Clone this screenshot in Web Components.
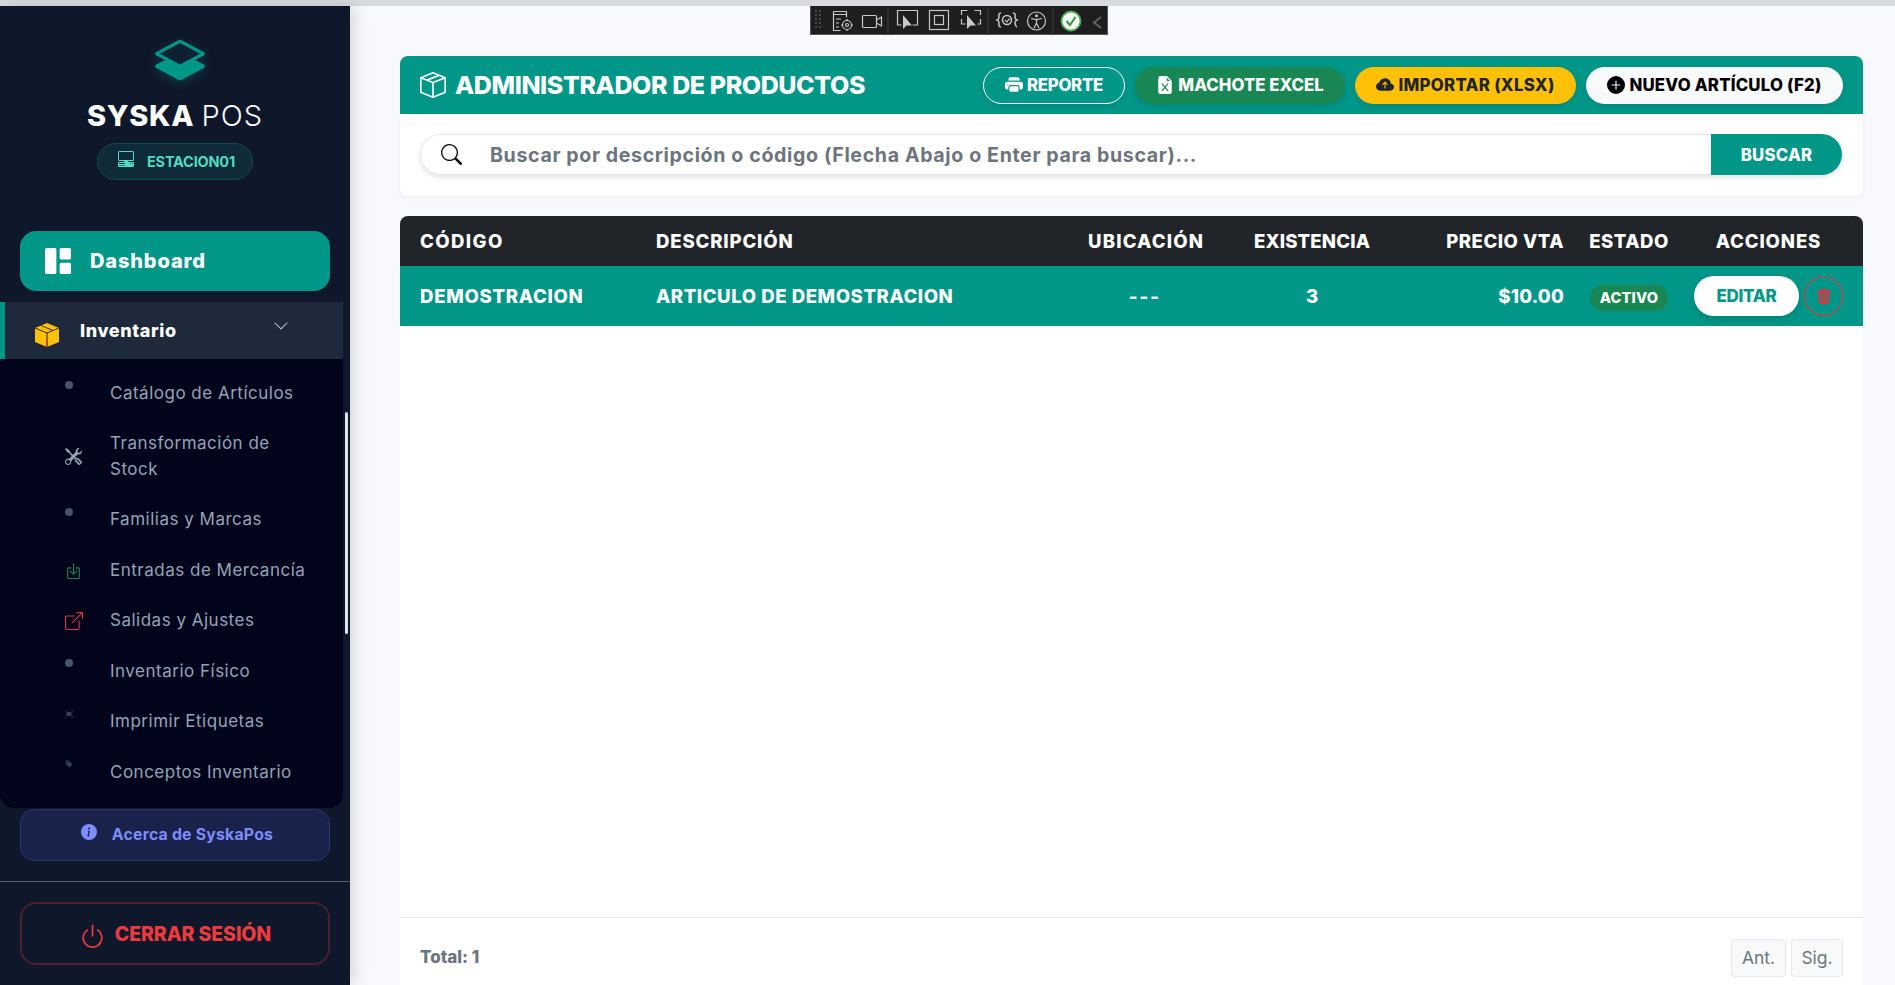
<!DOCTYPE html>
<html lang="es"><head><meta charset="utf-8"><title>Syska POS</title>
<style>html,body{margin:0;padding:0;height:985px;overflow:hidden;background:#f8f9fc;font-family:Inter,"Noto Sans",sans-serif}</style>
</head><body>
<syska-app>
  <syska-sidebar slot="side">
    <syska-brand></syska-brand>
    <nav-main label="Dashboard"></nav-main>
    <nav-panel>
      <nav-sub icon="dot">Catálogo de Artículos</nav-sub>
      <nav-sub icon="tools">Transformación de<br>Stock</nav-sub>
      <nav-sub icon="dot">Familias y Marcas</nav-sub>
      <nav-sub icon="in">Entradas de Mercancía</nav-sub>
      <nav-sub icon="out">Salidas y Ajustes</nav-sub>
      <nav-sub icon="dot">Inventario Físico</nav-sub>
      <nav-sub icon="scan">Imprimir Etiquetas</nav-sub>
      <nav-sub icon="tag">Conceptos Inventario</nav-sub>
    </nav-panel>
    <about-link>Acerca de SyskaPos</about-link>
    <logout-box>CERRAR SESIÓN</logout-box>
  </syska-sidebar>
  <dev-toolbar slot="over"></dev-toolbar>
  <page-header>
    <pill-btn kind="outline" icon="printer" w="142" ls="-.3">REPORTE</pill-btn>
    <pill-btn kind="excel" icon="excel" w="210" ls=".04">MACHOTE EXCEL</pill-btn>
    <pill-btn kind="warn" icon="cloud" w="221" ls=".29">IMPORTAR (XLSX)</pill-btn>
    <pill-btn kind="light" icon="plus" w="257" ls=".2">NUEVO ARTÍCULO (F2)</pill-btn>
  </page-header>
  <search-card></search-card>
  <product-panel></product-panel>
</syska-app>
<script>
const P={
layers:'M8.235 1.559a.5.5 0 0 0-.47 0l-7.5 4a.5.5 0 0 0 0 .882L3.188 8 .264 9.559a.5.5 0 0 0 0 .882l7.5 4a.5.5 0 0 0 .47 0l7.5-4a.5.5 0 0 0 0-.882L12.813 8l2.922-1.559a.5.5 0 0 0 0-.882l-7.5-4zM8 9.433 1.562 6 8 2.567 14.438 6 8 9.433z',
pc:'M1.5 0A1.5 1.5 0 0 0 0 1.5v7A1.5 1.5 0 0 0 1.5 10H6v1H1a1 1 0 0 0-1 1v3a1 1 0 0 0 1 1h14a1 1 0 0 0 1-1v-3a1 1 0 0 0-1-1h-5v-1h4.5A1.5 1.5 0 0 0 16 8.5v-7A1.5 1.5 0 0 0 14.5 0h-13Zm0 1h13a.5.5 0 0 1 .5.5v7a.5.5 0 0 1-.5.5h-13a.5.5 0 0 1-.5-.5v-7a.5.5 0 0 1 .5-.5ZM12 12.5a.5.5 0 1 1 1 0 .5.5 0 0 1-1 0Zm2 0a.5.5 0 1 1 1 0 .5.5 0 0 1-1 0ZM1.5 12h5a.5.5 0 0 1 0 1h-5a.5.5 0 0 1 0-1ZM1 14.25a.25.25 0 0 1 .25-.25h5.5a.25.25 0 1 1 0 .5h-5.5a.25.25 0 0 1-.25-.25Z',
grid:'M0 1a1 1 0 0 1 1-1h5a1 1 0 0 1 1 1v14a1 1 0 0 1-1 1H1a1 1 0 0 1-1-1V1zm9 0a1 1 0 0 1 1-1h5a1 1 0 0 1 1 1v5a1 1 0 0 1-1 1h-5a1 1 0 0 1-1-1V1zm0 9a1 1 0 0 1 1-1h5a1 1 0 0 1 1 1v5a1 1 0 0 1-1 1h-5a1 1 0 0 1-1-1v-5z',
box:'M8.186 1.113a.5.5 0 0 0-.372 0L1.846 3.5l2.404.961L10.404 2l-2.218-.887zm3.564 1.426L5.596 5 8 5.961 14.154 3.5l-2.404-.961zm3.25 1.7-6.5 2.6v7.922l6.5-2.6V4.24zM7.5 14.762V6.838L1 4.239v7.925l6.5 2.6zM7.443.184a1.5 1.5 0 0 1 1.114 0l7.129 2.852A.5.5 0 0 1 16 3.5v8.662a1 1 0 0 1-.629.928l-7.185 2.874a.5.5 0 0 1-.372 0L.63 13.09a1 1 0 0 1-.63-.928V3.5a.5.5 0 0 1 .314-.464L7.443.184z',
tools:'M1 0 0 1l2.2 3.081a1 1 0 0 0 .815.419h.07a1 1 0 0 1 .708.293l2.675 2.675-2.617 2.654A3.003 3.003 0 0 0 0 13a3 3 0 1 0 5.878-.851l2.654-2.617.968.968-.305.914a1 1 0 0 0 .242 1.023l3.27 3.27a.997.997 0 0 0 1.414 0l1.586-1.586a.997.997 0 0 0 0-1.414l-3.27-3.27a1 1 0 0 0-1.023-.242L10.5 9.5l-.96-.96 2.68-2.643A3.005 3.005 0 0 0 16 3c0-.269-.035-.53-.102-.777l-2.14 2.141L12 4l-.364-1.757L13.777.102a3 3 0 0 0-3.675 3.68L7.462 6.46 4.793 3.793a1 1 0 0 1-.293-.707v-.071a1 1 0 0 0-.419-.814L1 0Zm9.646 10.646a.5.5 0 0 1 .708 0l2.914 2.915a.5.5 0 0 1-.707.707l-2.915-2.914a.5.5 0 0 1 0-.708ZM3 11l.471.242.529.026.287.445.445.287.026.529L5 13l-.242.471-.026.529-.445.287-.287.445-.529.026L3 15l-.471-.242L2 14.732l-.287-.445L1.268 14l-.026-.529L1 13l.242-.471.026-.529.445-.287.287-.445.529-.026L3 11Z',
in:'M3.5 6a.5.5 0 0 0-.5.5v8a.5.5 0 0 0 .5.5h9a.5.5 0 0 0 .5-.5v-8a.5.5 0 0 0-.5-.5h-2a.5.5 0 0 1 0-1h2A1.5 1.5 0 0 1 14 6.5v8a1.5 1.5 0 0 1-1.5 1.5h-9A1.5 1.5 0 0 1 2 14.5v-8A1.5 1.5 0 0 1 3.5 5h2a.5.5 0 0 1 0 1h-2zM7.646 11.854a.5.5 0 0 0 .708 0l3-3a.5.5 0 0 0-.708-.708L8.5 10.293V1.5a.5.5 0 0 0-1 0v8.793L5.354 8.146a.5.5 0 1 0-.708.708l3 3z',
out:'M8.636 3.5a.5.5 0 0 0-.5-.5H1.5A1.5 1.5 0 0 0 0 4.5v10A1.5 1.5 0 0 0 1.5 16h10a1.5 1.5 0 0 0 1.5-1.5V7.864a.5.5 0 0 0-1 0V14.5a.5.5 0 0 1-.5.5h-10a.5.5 0 0 1-.5-.5v-10a.5.5 0 0 1 .5-.5h6.636a.5.5 0 0 0 .5-.5zM16 .5a.5.5 0 0 0-.5-.5h-5a.5.5 0 0 0 0 1h3.793L6.146 9.146a.5.5 0 1 0 .708.708L15 1.707V5.5a.5.5 0 0 0 1 0v-5z',
info:'M8 16A8 8 0 1 0 8 0a8 8 0 0 0 0 16zm.93-9.412-1 4.705c-.07.34.029.533.304.533.194 0 .487-.07.686-.246l-.088.416c-.287.346-.92.598-1.465.598-.703 0-1.002-.422-.808-1.319l.738-3.468c.064-.293.006-.399-.287-.47l-.451-.081.082-.381 2.29-.287zM8 5.5a1 1 0 1 1 0-2 1 1 0 0 1 0 2z',
power:'M7.5 1v7h1V1h-1zM3 8.812a4.999 4.999 0 0 1 2.578-4.375l-.485-.874A6 6 0 1 0 11 3.616l-.501.865A5 5 0 1 1 3 8.812z',
printer:'M5 1a2 2 0 0 0-2 2v1h10V3a2 2 0 0 0-2-2H5zm6 8H5a1 1 0 0 0-1 1v3a1 1 0 0 0 1 1h6a1 1 0 0 0 1-1v-3a1 1 0 0 0-1-1zM0 7a2 2 0 0 1 2-2h12a2 2 0 0 1 2 2v3a2 2 0 0 1-2 2h-1v-2a2 2 0 0 0-2-2H5a2 2 0 0 0-2 2v2H2a2 2 0 0 1-2-2V7zm2.5 1a.5.5 0 1 0 0-1 .5.5 0 0 0 0 1z',
excel:'M9.293 0H4a2 2 0 0 0-2 2v12a2 2 0 0 0 2 2h8a2 2 0 0 0 2-2V4.707A1 1 0 0 0 13.707 4L10 .293A1 1 0 0 0 9.293 0zM9.5 3.5v-2l3 3h-2a1 1 0 0 1-1-1zM5.884 6.68 8 9.219l2.116-2.54a.5.5 0 1 1 .768.641L8.651 10l2.233 2.68a.5.5 0 0 1-.768.64L8 10.781l-2.116 2.54a.5.5 0 0 1-.768-.641L7.349 10 5.116 7.32a.5.5 0 1 1 .768-.64z',
cloud:'M8 2a5.53 5.53 0 0 0-3.594 1.342c-.766.66-1.321 1.52-1.464 2.383C1.266 6.095 0 7.555 0 9.318 0 11.366 1.708 13 3.781 13h8.906C14.502 13 16 11.57 16 9.773c0-1.636-1.242-2.969-2.834-3.194C12.923 3.999 10.69 2 8 2zm2.354 5.146a.5.5 0 0 1-.708.708L8.5 6.707V10.5a.5.5 0 0 1-1 0V6.707L6.354 7.854a.5.5 0 1 1-.708-.708l2-2a.5.5 0 0 1 .708 0l2 2z',
plus:'M16 8A8 8 0 1 1 0 8a8 8 0 0 1 16 0zM8.5 4.5a.5.5 0 0 0-1 0v3h-3a.5.5 0 0 0 0 1h3v3a.5.5 0 0 0 1 0v-3h3a.5.5 0 0 0 0-1h-3v-3z',
search:'M11.742 10.344a6.5 6.5 0 1 0-1.397 1.398h-.001c.03.04.062.078.098.115l3.85 3.85a1 1 0 0 0 1.415-1.414l-3.85-3.85a1.007 1.007 0 0 0-.115-.1zM12 6.5a5.5 5.5 0 1 1-11 0 5.5 5.5 0 0 1 11 0z',
trash:'M11 1.5v1h3.5a.5.5 0 0 1 0 1h-.538l-.853 10.66A2 2 0 0 1 11.115 16h-6.23a2 2 0 0 1-1.994-1.84L2.038 3.5H1.5a.5.5 0 0 1 0-1H5v-1A1.5 1.5 0 0 1 6.5 0h3A1.5 1.5 0 0 1 11 1.5Zm-5 0v1h4v-1a.5.5 0 0 0-.5-.5h-3a.5.5 0 0 0-.5.5ZM4.5 5.029l.5 8.5a.5.5 0 1 0 .998-.06l-.5-8.5a.5.5 0 1 0-.998.06Zm6.53-.528a.5.5 0 0 0-.528.47l-.5 8.5a.5.5 0 0 0 .998.058l.5-8.5a.5.5 0 0 0-.47-.528ZM8 4.5a.5.5 0 0 0-.5.5v8.5a.5.5 0 0 0 1 0V5a.5.5 0 0 0-.5-.5Z',
chev:'M1.646 4.646a.5.5 0 0 1 .708 0L8 10.293l5.646-5.647a.5.5 0 0 1 .708.708l-6 6a.5.5 0 0 1-.708 0l-6-6a.5.5 0 0 1 0-.708z',
scan:'M1.5 1a.5.5 0 0 0-.5.5v3a.5.5 0 0 1-1 0v-3A1.5 1.5 0 0 1 1.5 0h3a.5.5 0 0 1 0 1h-3zM11 .5a.5.5 0 0 1 .5-.5h3A1.5 1.5 0 0 1 16 1.5v3a.5.5 0 0 1-1 0v-3a.5.5 0 0 0-.5-.5h-3a.5.5 0 0 1-.5-.5zM.5 11a.5.5 0 0 1 .5.5v3a.5.5 0 0 0 .5.5h3a.5.5 0 0 1 0 1h-3A1.5 1.5 0 0 1 0 14.5v-3a.5.5 0 0 1 .5-.5zm15 0a.5.5 0 0 1 .5.5v3a1.5 1.5 0 0 1-1.5 1.5h-3a.5.5 0 0 1 0-1h3a.5.5 0 0 0 .5-.5v-3a.5.5 0 0 1 .5-.5zM3 4h10v8H3z',
tag:'M2 1a1 1 0 0 0-1 1v4.586a1 1 0 0 0 .293.707l7 7a1 1 0 0 0 1.414 0l4.586-4.586a1 1 0 0 0 0-1.414l-7-7A1 1 0 0 0 6.586 1H2zm4 3.5a1.5 1.5 0 1 1-3 0 1.5 1.5 0 0 1 3 0z'
};
function def(name,html,init){
  const t=document.createElement('template');t.innerHTML=html;
  customElements.define(name,class extends HTMLElement{
    constructor(){super();this.attachShadow({mode:'open'}).appendChild(t.content.cloneNode(true));}
    connectedCallback(){if(init)init.call(this,this.shadowRoot);}
  });
}
def('x-icon','<style>:host{display:inline-flex;flex:none;width:var(--s,16px);height:var(--s,16px)}svg{width:100%;height:100%;display:block;fill:currentColor}</style><svg viewBox="0 0 16 16" aria-hidden="true"><path/></svg>',function(r){
  r.querySelector('path').setAttribute('d',P[this.getAttribute('name')]||'');
});
def('syska-app',`<style>
:host{display:flex;flex-direction:column;width:1895px;height:985px;overflow:hidden;background:#f8f9fc;position:relative}
.strip{height:6px;background:#d9dcdf;flex:none}
.row{flex:1;display:flex;min-height:0}
main{flex:1;min-width:0;display:flex;flex-direction:column;padding:50px 32px 0 50px;box-sizing:border-box}
</style><div class="strip"></div><slot name="over"></slot><div class="row"><slot name="side"></slot><main><slot></slot></main></div>`);
def('syska-sidebar',`<style>
:host{display:flex;flex-direction:column;flex:none;width:350px;background:#0f172a;box-shadow:4px 0 16px rgba(0,0,0,.14);position:relative;z-index:1}
</style><slot></slot>`);
def('syska-brand',`<style>
:host{display:flex;flex-direction:column;align-items:center;height:225px;box-sizing:border-box;padding-top:34px;flex:none}
x-icon{--s:50px;color:#009688;margin:-5px 0 0 10px;filter:drop-shadow(0 2px 6px rgba(0,150,136,.35))}
h1{margin:12.5px 0 0;color:#fff;font:300 29px/36px Inter,sans-serif;letter-spacing:1.05px;word-spacing:-2px;white-space:nowrap}
b{font-weight:800;letter-spacing:.7px}
.st{margin-top:9.5px;display:flex;align-items:center;box-sizing:border-box;width:156px;height:37px;padding-left:20px;border:1px solid #0f4a50;border-radius:19px;background:#0f2a38;color:#4fdcc0;font:700 14.5px Inter,sans-serif;letter-spacing:-.2px}
.st x-icon{--s:16px;color:#4fdcc0;margin:-6px 13px 0 0;filter:none}
</style><x-icon name="layers"></x-icon><h1><b>SYSKA</b> POS</h1><div class="st"><x-icon name="pc"></x-icon>ESTACION01</div>`);
def('nav-main',`<style>
:host{display:block;flex:none;padding:0 20px;height:71px;box-sizing:border-box}
a{display:flex;align-items:center;height:60px;border-radius:16px;background:#009688;color:#fff;padding-left:25px;font:800 20px Inter,sans-serif;letter-spacing:.87px}
x-icon{--s:26px;margin-right:19px}
</style><a><x-icon name="grid"></x-icon><span></span></a>`,function(r){r.querySelector('span').textContent=this.getAttribute('label');});
def('nav-panel',`<style>
:host{display:block;flex:none;width:343px;height:506px;background:#01041a;border-radius:0 0 14px 14px;position:relative;overflow:visible}
.head{display:flex;align-items:center;height:57px;background:#1e293b;border-left:5px solid #009688;box-sizing:border-box;padding-left:29px;color:#fff;font:800 18px Inter,sans-serif;letter-spacing:.6px}
svg{width:26px;height:26px;margin:9px 0 0 0;flex:none}
span{margin-left:20px;flex:1}
x-icon{--s:16px;color:#cbd5e1;margin:-10px 54px 0 0}
.list{padding-top:9px}
.bar{position:absolute;left:345px;top:110px;width:3px;height:222px;background:#dbe2ea;border-radius:2px}
</style><div class="head"><svg viewBox="0 0 26 26"><path d="M13 1 25 6v14l-12 5L1 20V6z" fill="#ffc107"/><path d="M1 6l12 5 12-5M13 11v14M7 3.500l12 5" fill="none" stroke="#3a2c00" stroke-width="1"/><path d="M13 16v9" stroke="#c0392b" stroke-width="1.400"/></svg><span>Inventario</span><x-icon name="chev"></x-icon></div><div class="list"><slot></slot></div><div class="bar"></div>`);
const SUBCOL={tools:'#94a3b8',in:'#198754',out:'#dc3545',scan:'#334155',tag:'#334155'};
def('nav-sub',`<style>
:host{display:flex;align-items:center;padding:12.5px 30px 12.5px 65px;color:#94a3b8;font:400 17px/25.5px Inter,sans-serif;letter-spacing:.5px;white-space:nowrap}
.i{flex:none;width:45px;display:flex;align-self:center}
.dot{width:8px;height:8px;border-radius:50%;background:#475569;margin-top:-12px}
x-icon{--s:17px}
.small{--s:8px;margin-top:-12px}
</style><div class="i"></div><div class="t"><slot></slot></div>`,function(r){
  const n=this.getAttribute('icon'),i=r.querySelector('.i');
  if(n==='dot'){i.innerHTML='<div class="dot"></div>';return;}
  const e=document.createElement('x-icon');e.setAttribute('name',n);e.style.color=SUBCOL[n];
  if(n==='scan'||n==='tag')e.className='small';
  if(n==='out')e.style.cssText+='--s:18px';
  i.appendChild(e);
});
def('about-link',`<style>
:host{display:flex;flex:none;align-items:center;justify-content:center;box-sizing:border-box;width:310px;height:52px;margin:1px 0 0 20px;padding:0 0 2px 4px;background:#18224a;border:1px solid #2a3570;border-radius:14px;color:#7f8cff;font:700 15.8px Inter,sans-serif;letter-spacing:.22px}
x-icon{--s:16px;margin:-4px 15px 0 0}
</style><x-icon name="info"></x-icon><slot></slot>`);
def('logout-box',`<style>
:host{display:block;flex:none;margin-top:20px;border-top:1px solid #5b616b;padding:20px}
div{display:flex;align-items:center;justify-content:center;box-sizing:border-box;height:63px;border:2px solid #4a1f2e;border-radius:16px;color:#ef3b3f;font:800 19.5px Inter,sans-serif;letter-spacing:-.1px}
x-icon{--s:27px;margin:6px 9px 0 0}
</style><div><x-icon name="power"></x-icon><slot></slot></div>`);
def('page-header',`<style>
:host{display:flex;flex:none;align-items:center;height:58px;background:#009688;border-radius:8px 8px 0 0;padding:0 20px;color:#fff;gap:10px}
h2{margin:0 auto 0 0;display:flex;align-items:center;font:800 25px Inter,sans-serif;letter-spacing:-.41px;white-space:nowrap}
x-icon{--s:26px;margin-right:9px}
</style><h2><x-icon name="box"></x-icon>ADMINISTRADOR DE PRODUCTOS</h2><slot></slot>`);
const KIND={outline:'background:transparent;color:#fff;border:1px solid #fff;box-shadow:0 2px 6px rgba(0,0,0,.1)',excel:'background:#198754;color:#fff;box-shadow:0 2px 6px rgba(0,0,0,.12)',warn:'background:#ffc107;color:#212529;box-shadow:0 2px 6px rgba(0,0,0,.1)',light:'background:#f8f9fa;color:#000;box-shadow:0 2px 6px rgba(0,0,0,.1)'};
def('pill-btn',`<style>
:host{display:inline-flex;flex:none;align-items:center;justify-content:center;box-sizing:border-box;height:37px;border-radius:19px;font:800 16.8px Inter,sans-serif;white-space:nowrap}
x-icon{--s:18px;margin-right:4px}
</style><x-icon></x-icon><slot></slot>`,function(r){
  this.style.cssText=KIND[this.getAttribute('kind')]+';width:'+this.getAttribute('w')+'px;letter-spacing:'+this.getAttribute('ls')+'px';
  const ic=r.querySelector('x-icon');ic.setAttribute('name',this.getAttribute('icon'));
  ic.shadowRoot.querySelector('path').setAttribute('d',P[this.getAttribute('icon')]);
});
def('search-card',`<style>
:host{display:block;flex:none;height:82px;background:#fff;border-radius:0 0 8px 8px;box-sizing:border-box;padding:20px 21px 20px 20px;box-shadow:0 2px 6px rgba(0,0,0,.04)}
.g{display:flex;height:41px;border-radius:21px;overflow:hidden;box-shadow:0 2px 5px rgba(0,0,0,.12)}
.f{flex:1;display:flex;align-items:center;background:#fff;border:1px solid #e2e5ea;border-right:0;border-radius:21px 0 0 21px;padding-left:20px;color:#6c757d;font:700 19.6px Inter,sans-serif;letter-spacing:.63px;white-space:nowrap;box-sizing:border-box}
x-icon{--s:21px;color:#111;margin-right:28px}
.b{flex:none;width:131px;background:#009688;color:#fff;font:800 16.8px Inter,sans-serif;display:flex;align-items:center;justify-content:center;letter-spacing:.2px}
</style><div class="g"><div class="f"><x-icon name="search"></x-icon>Buscar por descripción o código (Flecha Abajo o Enter para buscar)...</div><div class="b">BUSCAR</div></div>`);
def('product-panel',`<style>
:host{display:flex;flex-direction:column;flex:none;height:781px;margin-top:20px;background:#fff;border-radius:8px 8px 0 0;overflow:hidden;font-family:Inter,sans-serif}
.r{display:grid;grid-template-columns:236px 432px 154px 180px 182px 90px 189px;align-items:center;color:#fff;font-weight:800;font-size:18.6px}
.h{height:50px;background:#212529}
.d{height:60px;background:#009688}
.r>div{padding:0 20px;box-sizing:border-box;white-space:nowrap}
.r>.c{text-align:center}.r>.e{text-align:right}.r>.n{padding:0;text-align:center}
.a{display:flex;align-items:center;gap:5px}
.st{display:inline-block;background:#198754;border-radius:13px;font-size:14.6px;line-height:26px;width:78px;text-align:center;letter-spacing:.2px;margin-top:3px}
.ed{width:105px;height:40px;border-radius:20px;background:#fff;color:#009688;font-size:17px;display:flex;align-items:center;justify-content:center;box-shadow:0 3px 7px rgba(0,0,0,.14);letter-spacing:-.3px}
.tr{width:39px;height:40px;border-radius:50%;border:1px solid #dc3545;color:#dc3545;display:flex;align-items:center;justify-content:center;box-sizing:border-box}
.tr x-icon{--s:16px}
.sp{flex:1}
.f{flex:none;display:flex;align-items:center;justify-content:space-between;border-top:1px solid #e4e6e9;padding:20px;height:80px;box-sizing:border-box}
.t{color:#6c757d;font-weight:800;font-size:17px;letter-spacing:0;margin-top:-1px}
.p{display:flex;gap:5px}
.p div{height:38px;box-sizing:border-box;border:1px solid #e6e9ed;border-radius:4px;background:#f8f9fa;color:#6c757d;font-size:17.5px;display:flex;align-items:center;justify-content:center}
</style>
<div class="r h"><div style="letter-spacing:1.4px">CÓDIGO</div><div style="letter-spacing:.83px">DESCRIPCIÓN</div><div class="c" style="letter-spacing:1.17px">UBICACIÓN</div><div class="c" style="letter-spacing:.15px">EXISTENCIA</div><div class="e" style="letter-spacing:.5px">PRECIO VTA</div><div class="n" style="letter-spacing:.5px">ESTADO</div><div class="n" style="letter-spacing:.85px">ACCIONES</div></div>
<div class="r d"><div style="letter-spacing:.7px">DEMOSTRACION</div><div style="letter-spacing:.55px">ARTICULO DE DEMOSTRACION</div><div class="c" style="letter-spacing:2px">---</div><div class="c">3</div><div class="e" style="letter-spacing:.2px">$10.00</div><div class="n"><span class="st">ACTIVO</span></div><div class="a"><span class="ed">EDITAR</span><span class="tr"><x-icon name="trash"></x-icon></span></div></div>
<div class="sp"></div>
<div class="f"><div class="t">Total: 1</div><div class="p"><div style="width:55px">Ant.</div><div style="width:52px">Sig.</div></div></div>`);
def('dev-toolbar',`<style>
:host{position:absolute;left:810px;top:6px;width:298px;height:29px;box-sizing:border-box;background:#1e1e1e;border:1px solid #555;border-top:0;z-index:5}
svg{display:block;width:100%;height:100%}
</style><svg viewBox="1 0 296 28" fill="none" stroke="#c8c8c8" stroke-width="1.200">
<g fill="#4a4a4a" stroke="none"><rect x="5" y="4" width="2" height="2"/><rect x="9" y="4" width="2" height="2"/><rect x="5" y="8" width="2" height="2"/><rect x="9" y="8" width="2" height="2"/><rect x="5" y="12" width="2" height="2"/><rect x="9" y="12" width="2" height="2"/><rect x="5" y="16" width="2" height="2"/><rect x="9" y="16" width="2" height="2"/><rect x="5" y="20" width="2" height="2"/><rect x="9" y="20" width="2" height="2"/></g>
<path d="M23.500 5.500h13v6M23.500 5.500v19h7M23.500 8.500h13M26 13h5M26 17h3M26 21h3"/><circle cx="37" cy="19" r="4.500"/><circle cx="37" cy="19" r="1.500"/><path d="M37 13v1.500M37 23.500V25M31 19h1.500M41.500 19H43"/>
<rect x="52.500" y="9.500" width="14" height="12" rx="1"/><path d="M66.500 14l5-3v9l-5-3"/>
<path d="M87.500 19V4.500h20V19h-5M87.500 19h4"/><path d="M93 9v14l3.500-3.500h5.500z" fill="#c8c8c8" stroke="none"/>
<rect x="119.500" y="4.500" width="19" height="19"/><rect x="124.500" y="9.500" width="9" height="9"/>
<path d="M151.500 9V4.500h6M164.500 4.500h6V9M151.500 13v5h4M170.500 13v5h-3"/><path d="M157 9v14l3.500-3.500h5.500z" fill="#c8c8c8" stroke="none"/>
<path d="M191 7c-3 0-2 3-2 4.500s-1 2-2 2.500c1 .5 2 1 2 2.500s-1 4.500 2 4.500M203 7c3 0 2 3 2 4.500s1 2 2 2.500c-1 .5-2 1-2 2.500s1 4.500 2 4.500" stroke-width="1.500"/><circle cx="197" cy="14" r="4.500" stroke-width="1.500"/><path d="M195 14l1.800 1.800 3-3.500"/>
<circle cx="226.500" cy="15" r="9"/><circle cx="226.500" cy="9.800" r="1.500" fill="#c8c8c8" stroke="none"/><path d="M221 12.500l5.500 1.200 5.500-1.200M226.500 13.700v3.500l-2.500 4.800M226.500 17.200l2.500 4.800"/>
<circle cx="261" cy="15" r="9.500" fill="#fff" stroke="#4caf50" stroke-width="1.800"/><path d="M256.500 15l3.500 4 5.500-8" stroke="#2e9e3a" stroke-width="2"/>
<path d="M291 11l-7 5.500 7 5.500" stroke="#666" stroke-width="1.800"/>
<path d="M78 2v25M178 2v25M243 2v25" stroke="#3a3a3a"/>
</svg>`);
</script>
</body></html>
